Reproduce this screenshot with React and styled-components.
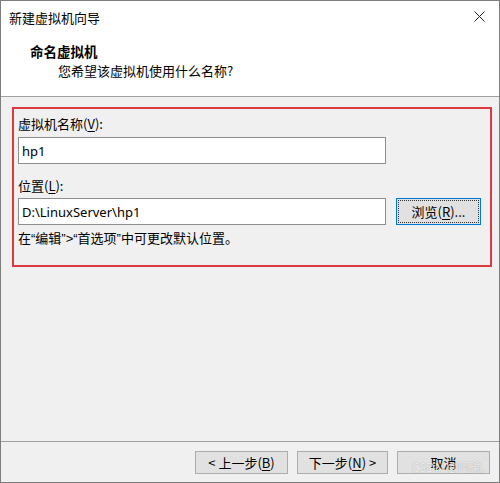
import styled, { createGlobalStyle } from 'styled-components';

const Global = createGlobalStyle`
  html, body { margin: 0; padding: 0; background: #ffffff; }
  body {
    font-family: "Noto Sans CJK SC", "Noto Sans", sans-serif;
    font-size: 12px;
    color: #000;
  }
`;

const Window = styled.div`
  box-sizing: border-box;
  width: 500px;
  height: 483px;
  border: 1px solid #7d7d7d;
  display: flex;
  flex-direction: column;
  background: #f0f0f0;
  position: relative;
  overflow: hidden;
`;

const Header = styled.div`
  background: #fff;
  height: 95px;
  border-bottom: 1px solid #a0a0a0;
  display: flex;
  flex-direction: column;
`;

const TitleBar = styled.div`
  height: 32px;
  display: flex;
  align-items: center;
  justify-content: space-between;
  padding: 0 14px 0 8px;
  font-size: 13px;
  line-height: 1;
`;

const CloseIcon = styled.svg`
  width: 11px;
  height: 11px;
  margin-top: -1px;
`;

const Heading = styled.div`
  margin: 9px 0 0 29px;
  font-size: 13.5px;
  font-weight: 700;
  line-height: 18px;
`;

const Subtitle = styled.div`
  margin: 2px 0 0 57px;
  font-size: 13px;
  line-height: 18px;
`;

const Body = styled.div`
  flex: 1;
  padding: 10px 8px 0 11px;
`;

const Highlight = styled.div`
  border: 2px solid #dc3a40;
  box-sizing: border-box;
  width: 480px;
  height: 160px;
  padding: 6px 4px 0 4px;
`;

const Label = styled.div`
  font-size: 13px;
  line-height: 18px;
  margin-top: ${(p) => p.$top || 0}px;

  u { text-underline-offset: 2px; }
`;

const Row = styled.div`
  display: flex;
  align-items: center;
  gap: 10px;
  margin-top: ${(p) => p.$top || 0}px;
`;

const Input = styled.div`
  box-sizing: border-box;
  width: 368px;
  height: 27px;
  background: #fff;
  border: 1px solid #8e8e8e;
  display: flex;
  align-items: center;
  padding-left: 3px;
  font-family: "Noto Sans", "Liberation Sans", sans-serif;
  font-size: 13px;
`;

const Hint = styled.div`
  font-family: "Liberation Sans", "Noto Sans CJK SC", sans-serif;
  font-size: 13px;
  line-height: 18px;
  margin-top: 5px;
`;

const Button = styled.div`
  box-sizing: border-box;
  width: ${(p) => p.$w || 93}px;
  height: ${(p) => p.$h || 23}px;
  background: #e1e1e1;
  border: 1px solid ${(p) => (p.$focus ? '#0078d7' : '#adadad')};
  display: flex;
  align-items: center;
  justify-content: center;
  font-size: 13px;
  padding: 1px;
  position: relative;

  u { text-underline-offset: 2px; }
`;

const FocusRing = styled.span`
  box-sizing: border-box;
  width: 100%;
  height: 100%;
  border: 1px dotted #333;
  display: flex;
  align-items: center;
  justify-content: center;
`;

const Footer = styled.div`
  border-top: 1px solid #a0a0a0;
  height: 41px;
  display: flex;
  justify-content: flex-end;
  align-items: flex-start;
  gap: 9px;
  padding: 9px 9px 0 0;
  box-sizing: border-box;
`;

const Watermark = styled.div`
  position: absolute;
  right: 14px;
  bottom: 6px;
  font-family: "Noto Sans", "Noto Sans CJK SC", sans-serif;
  font-size: 12px;
  color: rgba(255, 255, 255, 0.8);
  text-shadow: 0 0 1px rgba(0, 0, 0, 0.35);
  pointer-events: none;
`;

export default function App() {
  return (
    <>
      <Global />
      <Window>
        <Header>
          <TitleBar>
            <span>新建虚拟机向导</span>
            <CloseIcon viewBox="0 0 11 11">
              <path d="M0.5 0.5 L10.5 10.5 M10.5 0.5 L0.5 10.5" stroke="#222" strokeWidth="1" fill="none" />
            </CloseIcon>
          </TitleBar>
          <Heading>命名虚拟机</Heading>
          <Subtitle>您希望该虚拟机使用什么名称?</Subtitle>
        </Header>
        <Body>
          <Highlight>
            <Label>
              虚拟机名称(<u>V</u>):
            </Label>
            <Row $top={4}>
              <Input>hp1</Input>
            </Row>
            <Label $top={13}>
              位置(<u>L</u>):
            </Label>
            <Row $top={3}>
              <Input>D:\LinuxServer\hp1</Input>
              <Button $w={85} $h={27} $focus>
                <FocusRing>
                  浏览(<u>R</u>)...
                </FocusRing>
              </Button>
            </Row>
            <Hint>在“编辑”&gt;“首选项”中可更改默认位置。</Hint>
          </Highlight>
        </Body>
        <Footer>
          <Button>
            &lt; 上一步(<u>B</u>)
          </Button>
          <Button $w={91}>
            下一步(<u>N</u>) &gt;
          </Button>
          <Button>取消</Button>
        </Footer>
        <Watermark>CSDN @阿瑜.</Watermark>
      </Window>
    </>
  );
}
